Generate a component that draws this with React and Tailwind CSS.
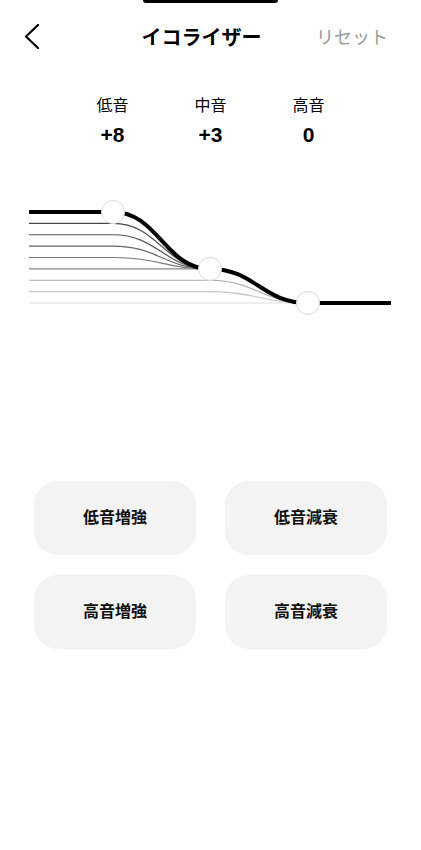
import React from 'react';

const font = { fontFamily: '"Liberation Sans", "Noto Sans CJK JP", sans-serif' };

const step = 11.375;
const yOf = (level) => 303 - step * level;
const K2 = yOf(3);

const thinColors = {
  7: '#474747',
  6: '#575757',
  5: '#676767',
  4: '#777777',
  3: '#888888',
  2: '#ababab',
  1: '#c6c6c6',
  0: '#dddddd',
};

const thinPath = (level) => {
  const y = yOf(level);
  if (level > 3) return `M29 ${y} H113 C158 ${y} 165 ${K2} 210 ${K2}`;
  if (level === 3) return `M29 ${y} H210`;
  if (level > 0) return `M29 ${y} H210 C255 ${y} 262 303 308 303`;
  return 'M29 303 H308';
};

const EqChart = () => {
  const knobs = [
    [113, yOf(8)],
    [210, K2],
    [308, 303],
  ];
  return (
    <svg className="block mt-[32px]" width="421" height="140" viewBox="0 180 421 140">
      {[7, 6, 5, 4, 3, 2, 1, 0].map((l) => (
        <path key={l} d={thinPath(l)} fill="none" stroke={thinColors[l]} strokeWidth="1.2" />
      ))}
      <path
        d={`M29 ${yOf(8)} H113 C158 ${yOf(8)} 165 ${K2} 210 ${K2} C255 ${K2} 262 303 308 303 H391`}
        fill="none"
        stroke="#000"
        strokeWidth="4"
      />
      {knobs.map(([cx, cy], i) => (
        <circle key={i} cx={cx} cy={cy} r="11.5" fill="#fff" stroke="#d9d9d9" strokeWidth="1" />
      ))}
    </svg>
  );
};

const bands = [
  { name: '低音', value: '+8' },
  { name: '中音', value: '+3' },
  { name: '高音', value: '0' },
];

const presets = ['低音増強', '低音減衰', '高音増強', '高音減衰'];

export default function App() {
  return (
    <div className="w-[421px] min-h-[850px] bg-white text-black" style={font}>
      <div className="flex justify-center">
        <div className="h-[3px] w-[135px] rounded-b-full bg-black" />
      </div>

      <header className="flex h-[70px] items-center">
        <div className="w-[100px] pl-[22px]">
          <svg width="20" height="28" viewBox="0 0 20 28" fill="none">
            <path d="M16 1 L4 12.5 L16 24" stroke="#000" strokeWidth="2.2" strokeLinecap="round" strokeLinejoin="round" />
          </svg>
        </div>
        <h1 className="flex-1 text-center text-[20px] font-bold leading-[26px]">イコライザー</h1>
        <div className="w-[118px] pl-[13px] text-[18px] leading-[24px] text-[#9a9a9a]">リセット</div>
      </header>

      <div className="mt-[23px] flex justify-center">
        {bands.map((b) => (
          <div key={b.name} className="flex w-[98px] flex-col items-center">
            <span className="text-[16px] leading-[20px]">{b.name}</span>
            <span className="mt-[6px] text-[21px] font-bold leading-[26px]">{b.value}</span>
          </div>
        ))}
      </div>

      <EqChart />

      <div className="mt-[161px] grid grid-cols-2 gap-x-[29px] gap-y-[20px] px-[34px]">
        {presets.map((p) => (
          <button
            key={p}
            className="flex h-[74px] items-center justify-center rounded-[24px] bg-[#f3f3f3] text-[16px] font-bold text-[#111]"
          >
            {p}
          </button>
        ))}
      </div>
    </div>
  );
}
